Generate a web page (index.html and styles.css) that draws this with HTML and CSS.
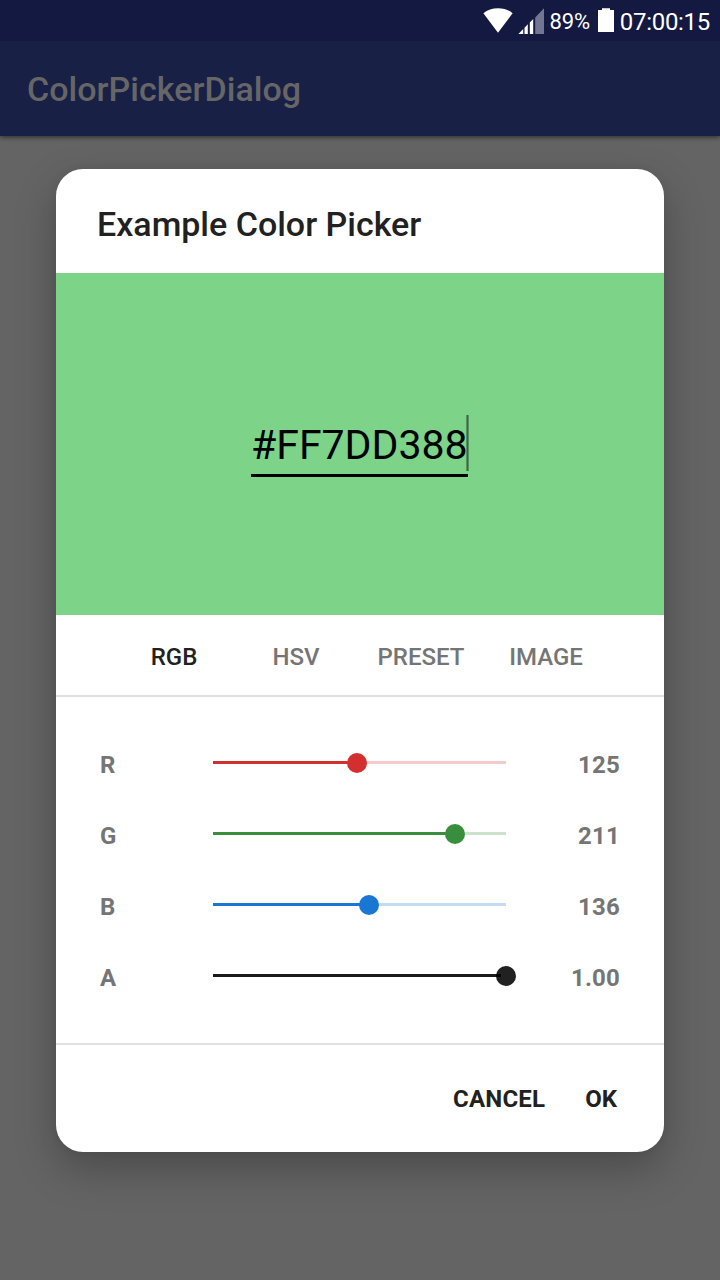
FILE: index.html
```html
<!DOCTYPE html>
<html lang="en">
<head>
<meta charset="utf-8">
<title>ColorPickerDialog</title>
<link rel="stylesheet" href="styles.css">
</head>
<body>
<div class="screen">
  <header class="status-bar">
    <svg class="wifi" width="30" height="26" viewBox="0 0 30 26"><path d="M0.4 5.2Q6.4 0.2 15 0.2T29.600 5.200L15 24.800Z" fill="#fff"/></svg>
    <svg class="signal" width="27" height="27" viewBox="0 0 27 27">
      <path d="M26 0.200V26H17.200V9.400Z" fill="#737693"/>
      <path d="M0.400 26L5.200 21V26ZM6.500 19.800L9.800 16.200V26H6.500ZM11.800 14.600L15.200 11V26H11.800Z" fill="#fff"/>
    </svg>
    <span class="battery-level">89%</span>
    <svg class="battery" width="16" height="25" viewBox="0 0 16 25"><path d="M4 0.200H12V2H16V24H0V2H4Z" fill="#fff"/></svg>
    <span class="clock">07:00:15</span>
  </header>
  <div class="app-bar"><span class="app-title">ColorPickerDialog</span></div>
  <main class="content">
    <section class="dialog">
      <h1 class="dialog-title">Example Color Picker</h1>
      <div class="preview"><div class="hex-field"><span>#FF7DD388</span><i class="caret"></i></div></div>
      <nav class="tabs">
        <span class="tab active">RGB</span><span class="tab">HSV</span><span class="tab">PRESET</span><span class="tab">IMAGE</span>
      </nav>
      <div class="sliders">
        <div class="row red"><span class="label">R</span><div class="slider"><div class="fill" style="width:49.02%"></div><i class="thumb" style="left:49.02%"></i></div><span class="value">125</span></div>
        <div class="row green"><span class="label">G</span><div class="slider"><div class="fill" style="width:82.75%"></div><i class="thumb" style="left:82.75%"></i></div><span class="value">211</span></div>
        <div class="row blue"><span class="label">B</span><div class="slider"><div class="fill" style="width:53.33%"></div><i class="thumb" style="left:53.33%"></i></div><span class="value">136</span></div>
        <div class="row alpha"><span class="label">A</span><div class="slider"><div class="fill" style="width:100%"></div><i class="thumb" style="left:100%"></i></div><span class="value">1.00</span></div>
      </div>
      <footer class="actions"><span class="cancel">CANCEL</span><span>OK</span></footer>
    </section>
  </main>
</div>
</body>
</html>
```
FILE: styles.css
```css
* { box-sizing: border-box; }
body { margin: 0; font-family: Roboto, sans-serif; }
.screen {
  width: 720px;
  height: 1280px;
  display: flex;
  flex-direction: column;
  background: #646464;
  overflow: hidden;
}
.status-bar {
  position: relative;
  z-index: 1;
  height: 41px;
  flex: none;
  display: flex;
  align-items: flex-start;
  justify-content: flex-end;
  padding: 8px 10px 0 0;
  background: #141941;
  color: #fff;
  white-space: nowrap;
}
.wifi { margin: 0 5px 0 0; }
.signal { margin-right: 5px; }
.battery { margin: 0 6px 0 8px; }
.battery-level { font-size: 22px; line-height: 28px; letter-spacing: -.2px; }
.clock { font-size: 24px; line-height: 28px; letter-spacing: -.3px; }
.app-bar {
  height: 95px;
  flex: none;
  padding: 28px 0 0 27px;
  background: #192046;
  box-shadow: 0 1px 5px rgba(0, 0, 0, .6);
}
.app-title { font-size: 34px; line-height: 40px; font-weight: 500; color: #666; letter-spacing: .03px; }
.content { padding: 33px 56px 0; }
.dialog {
  height: 983px;
  border-radius: 27px;
  background: #fff;
  color: #212121;
  box-shadow: 0 17px 40px rgba(0, 0, 0, .25), 0 0 10px rgba(0, 0, 0, .06);
  overflow: hidden;
}
.dialog-title {
  margin: 0;
  height: 104px;
  padding: 35px 0 0 41px;
  font-size: 34px;
  line-height: 40px;
  font-weight: 500;
}
.preview {
  height: 342px;
  display: flex;
  justify-content: center;
  padding-top: 142px;
  background: #7dd388;
}
.hex-field {
  position: relative;
  width: 217px;
  height: 62px;
  margin-right: 1px;
  padding-top: 6px;
  border-bottom: 3px solid #000;
  color: #000;
  font-size: 41px;
  line-height: 48px;
  white-space: nowrap;
}
.caret {
  position: absolute;
  right: -1px;
  top: 0;
  width: 3px;
  height: 56px;
  background: linear-gradient(90deg, rgba(0, 0, 0, .3) 1px, rgba(0, 0, 0, .52) 1px 2px, rgba(0, 0, 0, .3) 2px);
}
.tabs {
  height: 82px;
  display: grid;
  grid-template-columns: 122px 122px 128px 122px;
  justify-content: center;
  border-bottom: 2px solid #e0e0e0;
  font-size: 24px;
  line-height: 28px;
  font-weight: 500;
  color: #757575;
}
.tab { padding-top: 28px; text-align: center; }
.active { color: #212121; }
.sliders { height: 348px; padding: 31px 44px 0; border-bottom: 2px solid #e0e0e0; }
.row {
  display: grid;
  grid-template-columns: 113px 293px 1fr;
  height: 71px;
  font-size: 24px;
  line-height: 28px;
  font-weight: 700;
  color: #757575;
}
.label, .value { padding-top: 23px; }
.value { text-align: right; letter-spacing: .2px; }
.slider {
  position: relative;
  height: 3px;
  margin-top: 33px;
}
.fill { height: 3px; background: var(--c); }
.thumb {
  position: absolute;
  top: -8px;
  width: 20px;
  height: 20px;
  margin-left: -10px;
  border-radius: 50%;
  background: var(--c);
}
.red { --c: #d32f2f; }
.red .slider { background: #f4cbcb; }
.green { --c: #388e3c; }
.green .slider { background: #cbe3cc; }
.blue { --c: #1976d2; }
.blue .slider { background: #c3dcf4; }
.alpha { --c: #212121; }
.alpha .fill { background: #1a1a1a; }
.alpha .thumb { background: linear-gradient(#000, #000) 0 8px / 5px 3px no-repeat #212121; }
.actions {
  display: flex;
  justify-content: flex-end;
  gap: 40px;
  padding: 40px 47px 0 0;
  font-size: 24px;
  line-height: 28px;
  font-weight: 700;
}
.cancel { letter-spacing: .2px; }
```
